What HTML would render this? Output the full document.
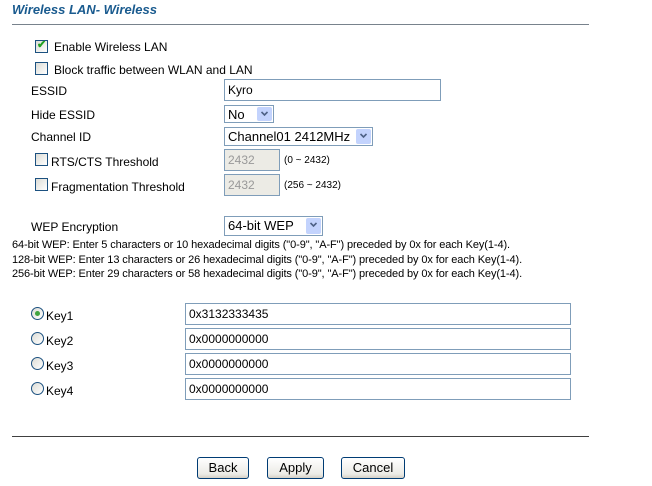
<!DOCTYPE html>
<html><head><style>
body{margin:0;width:652px;height:486px;background:#fff;font-family:"Liberation Sans",Arial,sans-serif;font-size:12px;color:#000;position:relative;overflow:hidden}
.a{position:absolute;white-space:nowrap}
.cb{position:absolute;width:11px;height:11px;border:1px solid #1c5180;background:linear-gradient(135deg,#dcdcd6,#fff)}
.rd{position:absolute;width:11px;height:11px;border:1px solid #1c5180;border-radius:50%;background:linear-gradient(135deg,#dcdcd6,#fff)}
.in{position:absolute;border:1px solid #7f9db9;background:#fff;box-sizing:border-box;padding:2px 3px;font-size:12px;line-height:16px}
.sel{position:absolute;border:1px solid #7f9db9;box-sizing:border-box;padding:1px 3px;font-size:13px;line-height:15px;background:#fff}
.arr{position:absolute;right:1px;top:1px;bottom:1px;width:15px;background:#c3d3fd;border-radius:2px}
.arr svg{position:absolute;left:4px;top:4px}
.btn{position:absolute;height:22px;border:1px solid #003c74;border-radius:3px;background:linear-gradient(#fff,#ecebe6 80%,#d6d0c5);box-sizing:border-box;font-size:13px;text-align:center;line-height:20px}
.sm{font-size:10px}
.nt{font-size:11px;letter-spacing:-0.1px}
</style></head><body>
<div class="a" style="left:12px;top:2px;font-weight:bold;font-style:italic;color:#1a5b8f;font-size:13px">Wireless LAN- Wireless</div>
<div class="a" style="left:12px;top:24px;width:577px;height:1px;background:#78828c"></div>

<div class="cb" style="left:35px;top:40px"><span style="position:absolute;left:1px;top:-3px;color:#21a121;font-size:11px;font-weight:bold">✔</span></div>
<div class="a" style="left:54px;top:40px">Enable Wireless LAN</div>
<div class="cb" style="left:35px;top:62px"></div>
<div class="a" style="left:54px;top:63px">Block traffic between WLAN and LAN</div>

<div class="a" style="left:31px;top:84px">ESSID</div>
<div class="in" style="left:224px;top:79px;width:217px;height:22px">Kyro</div>
<div class="a" style="left:31px;top:108px">Hide ESSID</div>
<div class="sel" style="left:224px;top:105px;width:50px;height:18px">No<div class="arr"><svg width="7" height="6"><path d="M0.5 1L3.5 4L6.5 1" stroke="#4d6185" stroke-width="1.6" fill="none"/></svg></div></div>
<div class="a" style="left:31px;top:130px">Channel ID</div>
<div class="sel" style="left:224px;top:127px;width:149px;height:19px">Channel01 2412MHz<div class="arr"><svg width="7" height="6"><path d="M0.5 1L3.5 4L6.5 1" stroke="#4d6185" stroke-width="1.6" fill="none"/></svg></div></div>

<div class="cb" style="left:35px;top:153px"></div>
<div class="a" style="left:51px;top:155px">RTS/CTS Threshold</div>
<div class="in" style="left:224px;top:149px;width:56px;height:22px;background:#ecebe5;color:#999">2432</div>
<div class="a sm" style="left:284px;top:155px">(0 ~ 2432)</div>
<div class="cb" style="left:35px;top:178px"></div>
<div class="a" style="left:51px;top:180px">Fragmentation Threshold</div>
<div class="in" style="left:224px;top:174px;width:56px;height:22px;background:#ecebe5;color:#999">2432</div>
<div class="a sm" style="left:284px;top:180px">(256 ~ 2432)</div>

<div class="a" style="left:31px;top:220px">WEP Encryption</div>
<div class="sel" style="left:224px;top:216px;width:99px;height:20px">64-bit WEP<div class="arr"><svg width="7" height="6"><path d="M0.5 1L3.5 4L6.5 1" stroke="#4d6185" stroke-width="1.6" fill="none"/></svg></div></div>

<div class="a nt" style="left:12px;top:239px">64-bit WEP: Enter 5 characters or 10 hexadecimal digits ("0-9", "A-F") preceded by 0x for each Key(1-4).</div>
<div class="a nt" style="left:12px;top:254px">128-bit WEP: Enter 13 characters or 26 hexadecimal digits ("0-9", "A-F") preceded by 0x for each Key(1-4).</div>
<div class="a nt" style="left:12px;top:268px">256-bit WEP: Enter 29 characters or 58 hexadecimal digits ("0-9", "A-F") preceded by 0x for each Key(1-4).</div>

<div class="rd" style="left:31px;top:307px"><span style="position:absolute;left:3px;top:3px;width:5px;height:5px;border-radius:50%;background:#3fa33f"></span></div>
<div class="a" style="left:46px;top:309px">Key1</div>
<div class="in" style="left:185px;top:303px;width:386px;height:22px">0x3132333435</div>
<div class="rd" style="left:31px;top:332px"></div>
<div class="a" style="left:46px;top:334px">Key2</div>
<div class="in" style="left:185px;top:328px;width:386px;height:22px">0x0000000000</div>
<div class="rd" style="left:31px;top:357px"></div>
<div class="a" style="left:46px;top:359px">Key3</div>
<div class="in" style="left:185px;top:353px;width:386px;height:22px">0x0000000000</div>
<div class="rd" style="left:31px;top:382px"></div>
<div class="a" style="left:46px;top:384px">Key4</div>
<div class="in" style="left:185px;top:378px;width:386px;height:22px">0x0000000000</div>

<div class="a" style="left:12px;top:436px;width:577px;height:1px;background:#404040"></div>

<div class="btn" style="left:197px;top:457px;width:52px">Back</div>
<div class="btn" style="left:267px;top:457px;width:57px">Apply</div>
<div class="btn" style="left:341px;top:457px;width:64px">Cancel</div>
</body></html>
